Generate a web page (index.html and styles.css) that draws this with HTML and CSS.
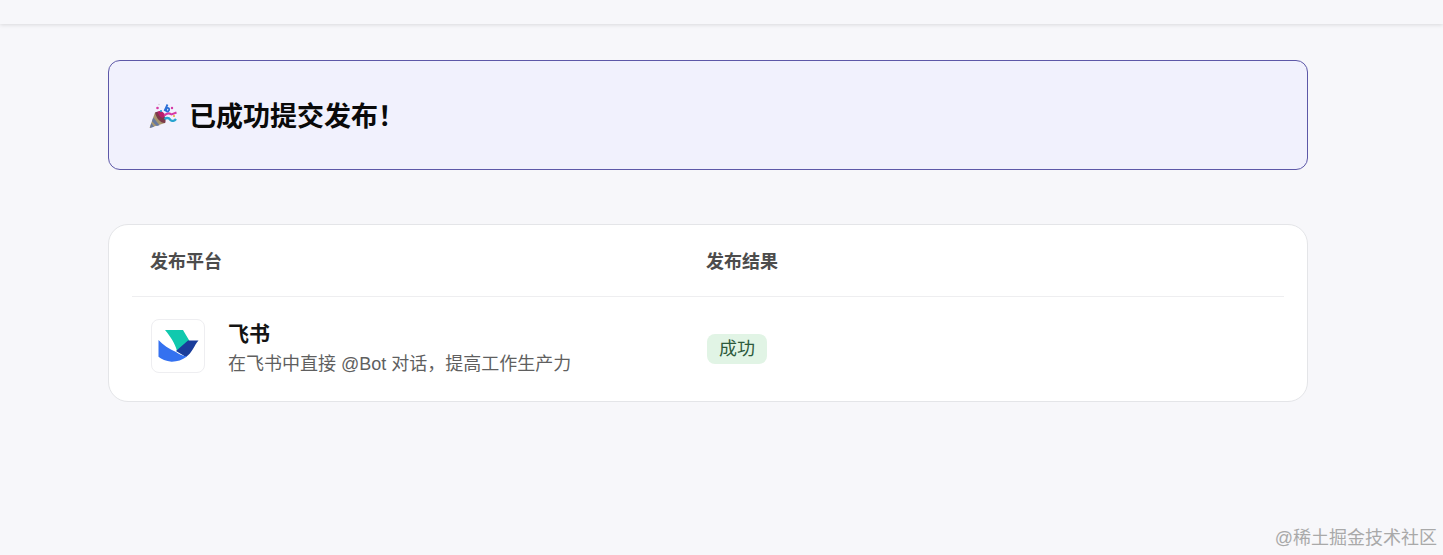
FILE: index.html
```html
<!DOCTYPE html>
<html lang="zh-CN">
<head>
  <meta charset="UTF-8">
  <meta name="viewport" content="width=device-width, initial-scale=1.0">
  <title>发布结果</title>
  <link rel="stylesheet" href="styles.css">
</head>
<body>
  <div class="topbar"></div>

  <main class="content">
    <div class="banner">
      <svg class="party" viewBox="0 0 28 26" width="28" height="26" aria-hidden="true">
        <path d="M6 9.500 L0.500 25 L16 20 Z" fill="#a8976f"/>
        <path d="M4.300 14.500 L10.500 22.200 L7.700 23.100 L3 18.200 Z" fill="#66799e"/>
        <path d="M2.300 20 L5 23.800 L1 25 Z" fill="#66799e"/>
        <path d="M6 9.500 C9 7.500 14 10 16 14 C17 17.500 16.500 20 16 20 C12 20.500 7 15 6 9.500 Z" fill="#7d3a4a"/>
        <path d="M8.500 8.500 C11 7 14.500 8.500 16 12 C15.500 14 14 15 12.500 14.500 C10.500 13.500 9 11 8.500 8.500 Z" fill="#b81f6b"/>
        <path d="M15.500 12.500 C18 9.500 21 10.500 22.500 11.500 L27.500 9.500" fill="none" stroke="#d63aa5" stroke-width="2"/>
        <path d="M15.500 16 C18 14.500 20 15 21.500 17 C23 18.500 25.500 18 27 16" fill="none" stroke="#27a3cf" stroke-width="2.400"/>
        <path d="M15.500 8 L18.500 1.500 M18 5 C20.500 4.500 21 7 19 8.500 C17 9 16.500 6.500 18 5" fill="none" stroke="#2b6fd6" stroke-width="1.800"/>
        <circle cx="8.500" cy="5" r="1.300" fill="#d63aa5"/>
        <circle cx="12" cy="8" r="1.100" fill="#27a3cf"/>
        <circle cx="23" cy="5" r="1.200" fill="#d63aa5"/>
        <circle cx="10" cy="1.500" r=".8" fill="#d8c9d0"/>
        <circle cx="25" cy="13" r="1" fill="#e8b030"/>
      </svg>
      <h1>已成功提交发布！</h1>
    </div>

    <section class="card">
      <div class="row head">
        <div class="col-platform">发布平台</div>
        <div class="col-result">发布结果</div>
      </div>
      <div class="row item">
        <div class="col-platform platform">
          <div class="logo">
            <svg viewBox="0 0 54 54" width="54" height="54" aria-hidden="true">
              <path d="M14 11 H32 L38.500 22 L26 32 C24 24 19 17 14 11 Z" fill="#10c9ae"/>
              <path d="M37 21.500 H47.500 C45 24 44 27 42 30 C40 33 38 36 35 38 L25 32 Z" fill="#1a3d9b"/>
              <path d="M7.500 21 C12 26 18 30 25 33 C28 35 31 36.500 36 37.500 C31 41 26 42.800 20.500 42.700 C15 42.300 10.500 40.500 7.500 37.800 Z" fill="#3471f0"/>
            </svg>
          </div>
          <div class="info">
            <div class="name">飞书</div>
            <div class="desc">在飞书中直接 @Bot 对话，提高工作生产力</div>
          </div>
        </div>
        <div class="col-result">
          <span class="tag">成功</span>
        </div>
      </div>
    </section>
  </main>

  <div class="watermark">@稀土掘金技术社区</div>
</body>
</html>
```

FILE: styles.css
```css
* { box-sizing: border-box; }
html, body { height: 100%; }
body { margin: 0; background: #f7f7fa; font-family: "Liberation Sans", "Noto Sans CJK SC", sans-serif; color: #111; overflow: hidden; }

.topbar { height: 24px; background: #f7f7fa; box-shadow: 0 1px 4px rgba(0,0,0,0.12); }

.content { width: 1200px; margin: 36px 0 0 108px; }

.banner { height: 110px; padding: 0 0 2px 40px; display: flex; align-items: center; gap: 12px; background: #f1f1fd; border: 1px solid #5d58a8; border-radius: 12px; }
.banner h1 { margin: 0; font-size: 27px; font-weight: 700; color: #0a0a0a; }
.party { flex: none; position: relative; top: 2px; }

.card { margin-top: 54px; height: 178px; padding: 0 23px; background: #fff; border: 1px solid #e4e5e8; border-radius: 20px; }
.row { display: flex; }
.col-platform { width: 574px; padding-left: 18px; }
.col-result { flex: 1; }
.head { height: 72px; padding-bottom: 2px; align-items: center; font-size: 18px; font-weight: 700; color: #4c4c4c; border-bottom: 1px solid #eeeef0; }
.item { align-items: center; height: 105px; }

.platform { display: flex; align-items: center; gap: 23px; padding-left: 19px; margin-top: -3px; }
.logo { width: 54px; height: 54px; margin-top: -4px; background: #fff; border: 1px solid #eeeef1; border-radius: 8px; overflow: hidden; flex: none; }
.logo svg { display: block; margin: -1px; }
.info { margin-top: 1px; }
.name { font-size: 21px; font-weight: 700; color: #141414; line-height: 28px; }
.desc { font-size: 18px; color: #5f5f5f; line-height: 26px; margin-top: 3px; }

.col-result .tag { margin: -2px 0 0 1px; }
.tag { display: inline-block; height: 30px; padding: 0 12px; line-height: 30px; font-size: 18px; color: #2d5a3c; background: #e1f4e5; border-radius: 8px; }

.watermark { position: absolute; right: 6px; bottom: 4px; font-size: 18px; line-height: 26px; color: #a9a9a9; }
```
